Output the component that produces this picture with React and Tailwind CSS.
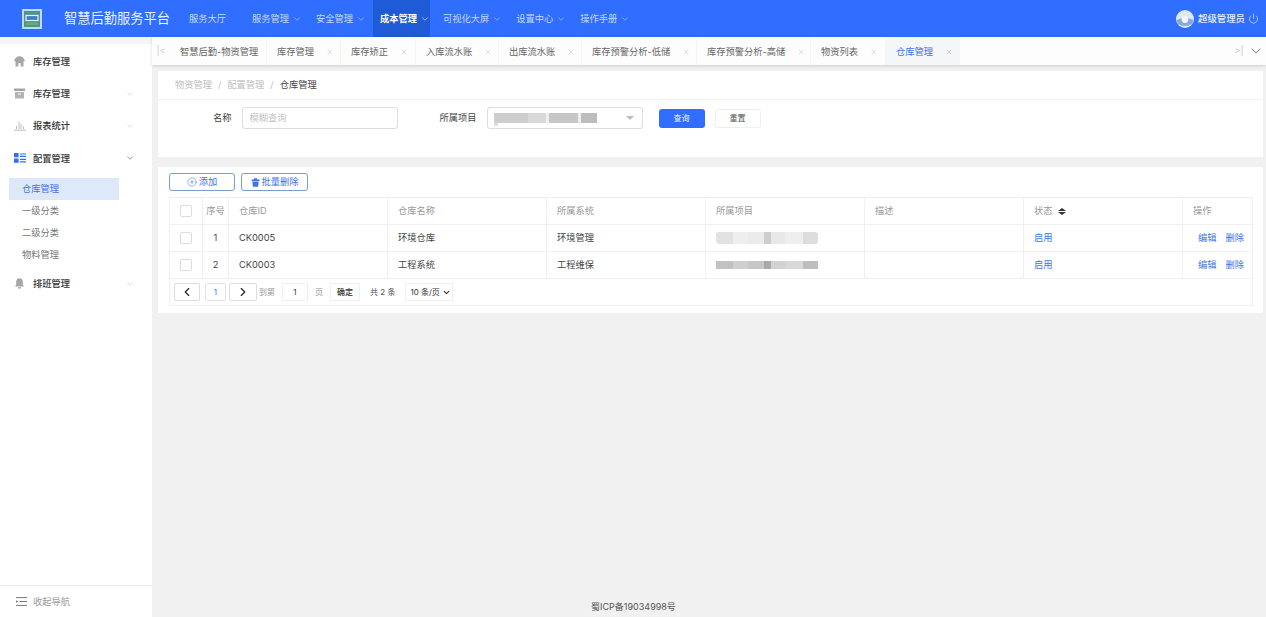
import React from "react";
import { ChevronDown, ChevronLeft, ChevronRight, X, Power, CirclePlus } from "lucide-react";

const FONT = "font-['Inter','Noto_Sans_CJK_SC',sans-serif]";

function Logo() {
  return (
    <svg width="20" height="20" viewBox="0 0 20 20" className="shrink-0">
      <rect x="1" y="1" width="18" height="18" fill="#4f9490" stroke="#cfe3fa" strokeWidth="1.8" />
      <rect x="4" y="6.5" width="12" height="5" fill="#3f7fc0" stroke="#e6f1fb" strokeWidth="1.2" />
      <rect x="4" y="13.5" width="12" height="2.5" fill="#5fae84" />
    </svg>
  );
}

function Avatar() {
  return (
    <svg width="18" height="18" viewBox="0 0 18 18" className="shrink-0">
      <circle cx="9" cy="9" r="9" fill="#dfe8f6" />
      <path d="M0.5 10 Q9 6 17.5 10 L16 14 Q9 18 2 14 Z" fill="#86a9e0" />
      <circle cx="9" cy="9.5" r="3.4" fill="#f3f6fb" />
    </svg>
  );
}

function NavItem({ label, arrow = true, active = false, className = "" }) {
  return (
    <div className={`flex h-full items-center gap-[3px] ${active ? "bg-[#1f5bd6] pl-[7px] font-bold text-white" : "text-[#c5d8ff]"} ${className}`}>
      <span>{label}</span>
      {arrow && <ChevronDown size={10} strokeWidth={1.5} />}
    </div>
  );
}

function Tab({ label, close = true, active = false, w }) {
  return (
    <div className={`flex h-full shrink-0 items-center gap-[12px] border-r border-[#f5f5f5] pl-[10px] pt-[1px] ${w} ${active ? "bg-[#f5f6f8] text-[#3f74e4]" : "text-[#666]"}`}>
      <span>{label}</span>
      {close && <X size={8} strokeWidth={1.5} className={active ? "text-[#8fa8d8]" : "text-[#c4c4c4]"} />}
    </div>
  );
}

function SideItem({ icon, label, arrow = true, dark = false }) {
  return (
    <div className="flex h-[32.4px] items-center pl-[14px] pr-[17px] text-[#333]">
      <span className="flex w-[19px] shrink-0 items-center">{icon}</span>
      <span className="font-medium">{label}</span>
      {arrow && <ChevronDown size={10} strokeWidth={1.4} className={`ml-auto ${dark ? "text-[#555]" : "text-[#c4c4c4]"}`} />}
    </div>
  );
}

function Redacted({ dark = false }) {
  const c = dark
    ? ["bg-[#c2c2c2]", "bg-[#cfcfcf]", "bg-[#c6c6c6]", "bg-[#a9a9a9]", "bg-[#d2d2d2]", "bg-[#d8d8d8]", "bg-[#bebebe]"]
    : ["bg-[#e2e2e2]", "bg-[#eeeeee]", "bg-[#ebebeb]", "bg-[#cdcdcd]", "bg-[#e8e8e8]", "bg-[#eeeeee]", "bg-[#dddddd]"];
  const w = ["w-[17px]", "w-[15px]", "w-[16px]", "w-[7px]", "w-[14px]", "w-[18px]", "w-[15px]"];
  return (
    <div className={`flex overflow-hidden ${dark ? "h-[8px]" : "h-[12px] rounded-[3px]"}`}>
      {c.map((x, i) => (
        <div key={i} className={`h-full ${x} ${w[i]}`} />
      ))}
    </div>
  );
}

const ROW = "grid grid-cols-[33px_26px_159px_159px_159px_159px_159px_159px_71px] h-[27px] items-center border-b border-[#f0f0f0]";
const CELL = "flex h-full items-center border-r border-[#f0f0f0] px-[10px]";

function Check() {
  return <div className="h-[12px] w-[12px] rounded-[2px] border border-[#dcdcdc] bg-white" />;
}

function DataRow({ n, id, name, sys, dark }) {
  return (
    <div className={`${ROW} text-[#444]`}>
      <div className={`${CELL} justify-center`}><Check /></div>
      <div className={`${CELL} justify-center`}>{n}</div>
      <div className={CELL}>{id}</div>
      <div className={CELL}>{name}</div>
      <div className={CELL}>{sys}</div>
      <div className={CELL}><Redacted dark={dark} /></div>
      <div className={CELL}></div>
      <div className={`${CELL} text-[#3f74e4]`}>启用</div>
      <div className="flex h-full items-center justify-end gap-[9px] pr-[10px] text-[#3f74e4]"><span>编辑</span><span>删除</span></div>
    </div>
  );
}

export default function App() {
  return (
    <div className={`flex h-[617px] w-[1266px] flex-col overflow-hidden bg-[#f1f1f1] text-[9.25px] leading-none ${FONT}`}>
      <header className="flex h-[37px] shrink-0 items-center bg-[#2f6eff] pl-[22px] pr-[7px]">
        <Logo />
        <span className="ml-[22px] text-[13.25px] text-[#eaf1ff]">智慧后勤服务平台</span>
        <NavItem label="服务大厅" arrow={false} className="ml-[19px]" />
        <NavItem label="服务管理" className="ml-[26px]" />
        <NavItem label="安全管理" className="ml-[14px]" />
        <NavItem label="成本管理" active className="ml-[7px]" />
        <NavItem label="可视化大屏" className="ml-[13px]" />
        <NavItem label="设置中心" className="ml-[14px]" />
        <NavItem label="操作手册" className="ml-[14px]" />
        <div className="ml-auto flex items-center text-[#e9f0ff]">
          <Avatar />
          <span className="ml-[4px] text-[9.4px] font-medium">超级管理员</span>
          <Power size={11} strokeWidth={1.4} className="ml-[3px]" />
        </div>
      </header>

      <div className="flex min-h-0 flex-1">
        <aside className="flex w-[152px] shrink-0 flex-col bg-white">
          <div className="h-[7px] shrink-0 bg-[#f5f5f7]" />
          <div className="h-[1px] shrink-0" />
          <SideItem
            icon={
              <svg width="11" height="11" viewBox="0 0 11 11">
                <path d="M0 5.2 C1 2 3 0.3 5.5 0.3 C8 0.3 10 2 11 5.2 L9.5 5.2 L9.5 10.5 L6.6 10.5 L6.6 7 L4.4 7 L4.4 10.5 L1.5 10.5 L1.5 5.2 Z" fill="#a6a6a6" />
              </svg>
            }
            label="库存管理"
            arrow={false}
          />
          <SideItem
            icon={
              <svg width="11" height="11" viewBox="0 0 11 11">
                <rect x="0" y="0.5" width="11" height="2.5" fill="#a6a6a6" />
                <path d="M1 4 H10 V10.5 H1 Z M4 5.5 V6.6 H7 V5.5 Z" fill="#b4b4b4" fillRule="evenodd" />
              </svg>
            }
            label="库存管理"
          />
          <SideItem
            icon={
              <svg width="12" height="11" viewBox="0 0 12 11">
                <path d="M0 10.2h12M2.5 9V6M5 9V1.5M7 9V4M9.5 9V6.5" stroke="#bcbcbc" strokeWidth="1" fill="none" />
              </svg>
            }
            label="报表统计"
          />
          <SideItem
            icon={
              <svg width="12" height="10" viewBox="0 0 12 10">
                <rect x="0" y="0" width="4.6" height="4.3" fill="#2f6eff" />
                <rect x="0" y="5.5" width="4.6" height="4.3" fill="#2f6eff" />
                <path d="M6 1h6M6 3.4h6M6 6.3h6M6 8.9h6" stroke="#2f6eff" strokeWidth="1.2" />
              </svg>
            }
            label="配置管理"
            dark
          />
          <div className="mt-[3px] flex flex-col pl-[9px] text-[#777]">
            <div className="flex h-[22px] w-[110px] items-center bg-[#dde8fb] pl-[13px] text-[#3f74e4]">仓库管理</div>
            <div className="flex h-[22px] items-center pl-[13px]">一级分类</div>
            <div className="flex h-[22px] items-center pl-[13px]">二级分类</div>
            <div className="flex h-[22px] items-center pl-[13px]">物料管理</div>
          </div>
          <div className="mt-[2px]">
            <SideItem
              icon={
                <svg width="11" height="11" viewBox="0 0 11 11">
                  <path d="M5.5 0.3 C3.2 0.3 2.2 2 2.2 4 V7 L0.8 8.5 H10.2 L8.8 7 V4 C8.8 2 7.8 0.3 5.5 0.3 Z" fill="#a6a6a6" />
                  <rect x="4" y="9.2" width="3" height="1.3" fill="#a6a6a6" />
                </svg>
              }
              label="排班管理"
            />
          </div>
          <div className="mt-auto flex h-[32px] items-center border-t border-[#e6e6e6] pl-[16px] text-[#999]">
            <svg width="11" height="9" viewBox="0 0 11 9" className="shrink-0">
              <path d="M0 0.6h11M3.5 4.5h7.5M0 8.4h11" stroke="#777" strokeWidth="1" />
              <path d="M0 3.2 L2.2 4.5 L0 5.8 Z" fill="#777" />
            </svg>
            <span className="ml-[6px]">收起导航</span>
          </div>
        </aside>

        <main className="flex min-w-0 flex-1 flex-col">
          <div className="flex h-[28px] shrink-0 items-center bg-[#fdfdfd] shadow-[0_1px_3px_rgba(0,0,0,0.15)]">
            <div className="flex h-full w-[18px] shrink-0 items-center justify-center text-[#ccc]">|&lt;</div>
            <Tab label="智慧后勤-物资管理" close={false} w="w-[97px]" />
            <Tab label="库存管理" w="w-[74px]" />
            <Tab label="库存矫正" w="w-[75px]" />
            <Tab label="入库流水账" w="w-[83px]" />
            <Tab label="出库流水账" w="w-[83px]" />
            <Tab label="库存预警分析-低储" w="w-[115px]" />
            <Tab label="库存预警分析-高储" w="w-[114px]" />
            <Tab label="物资列表" w="w-[75px]" />
            <Tab label="仓库管理" active w="w-[74px]" />
            <div className="ml-auto flex h-full items-center">
              <span className="w-[18px] text-center text-[#ccc]">&gt;|</span>
              <ChevronDown size={16} strokeWidth={1.1} className="mr-[2px] text-[#555]" />
            </div>
          </div>

          <div className="flex flex-1 flex-col pl-[6px] pr-[3px] pt-[6px]">
            <section className="h-[86px] shrink-0 bg-white">
              <div className="flex h-[29px] items-center gap-[6px] border-b border-[#f3f3f3] pl-[17px] text-[#c0c0c0]">
                <span>物资管理</span><span>/</span><span>配置管理</span><span>/</span><span className="text-[#444]">仓库管理</span>
              </div>
              <div className="flex items-center pt-[7px] text-[#444]">
                <span className="ml-[55px]">名称</span>
                <div className="ml-[10px] flex h-[22px] w-[156px] items-center rounded-[3px] border border-[#dcdcdc] pl-[7px] text-[#c4c4c4]">模糊查询</div>
                <span className="ml-[42px]">所属项目</span>
                <div className="ml-[10px] flex h-[22px] w-[156px] items-center rounded-[3px] border border-[#dcdcdc] pl-[6px] pr-[8px]">
                  <div className="mt-[3px] flex flex-col">
                    <div className="flex h-[10px] overflow-hidden">
                      <div className="h-full w-[34px] bg-[#cdcdcd]" />
                      <div className="h-full w-[18px] bg-[#d9d9d9]" />
                      <div className="h-full w-[3px] bg-[#eeeeee]" />
                      <div className="h-full w-[29px] bg-[#c6c6c6]" />
                      <div className="h-full w-[3px] bg-[#eeeeee]" />
                      <div className="h-full w-[16px] bg-[#bdbdbd]" />
                    </div>
                    <div className="h-[3px] w-[4px] bg-[#dedede]" />
                  </div>
                  <div className="ml-auto h-0 w-0 border-x-[4px] border-t-[4px] border-x-transparent border-t-[#bdbdbd]" />
                </div>
                <button className="ml-[16px] h-[19px] w-[46px] rounded-[3px] bg-[#2f6eff] text-[8px] text-[#eaf1ff]">查询</button>
                <button className="ml-[10px] h-[19px] w-[46px] rounded-[3px] border border-[#efefef] bg-white text-[8px] text-[#555]">重置</button>
              </div>
            </section>

            <section className="mt-[10px] flex h-[146px] shrink-0 flex-col bg-white px-[11px] pt-[6px]">
              <div className="flex h-[18px] shrink-0 gap-[6px] text-[#3f74e4]">
                <button className="flex w-[66px] items-center justify-center gap-[2px] rounded-[3px] border border-[#7b9dc9]">
                  <CirclePlus size={10} strokeWidth={1.3} />添加
                </button>
                <button className="flex w-[67px] items-center justify-center gap-[2px] rounded-[3px] border border-[#7b9dc9]">
                  <svg width="9" height="9" viewBox="0 0 9 9" className="shrink-0">
                    <path d="M0.5 1.5H8.5V3H0.5Z M3 0.3H6V1.5H3Z M1.3 3.5H7.7L7.1 8.7H1.9Z" fill="#3f74e4" />
                  </svg>
                  批量删除
                </button>
              </div>
              <div className="mt-[6px] w-[1084px] border-x border-b border-t border-[#f0f0f0]">
                <div className={`${ROW} text-[#999]`}>
                  <div className={`${CELL} justify-center`}><Check /></div>
                  <div className={`${CELL} justify-center !px-0`}>序号</div>
                  <div className={CELL}>仓库ID</div>
                  <div className={CELL}>仓库名称</div>
                  <div className={CELL}>所属系统</div>
                  <div className={CELL}>所属项目</div>
                  <div className={CELL}>描述</div>
                  <div className={`${CELL} gap-[5px]`}>
                    <span>状态</span>
                    <span className="flex flex-col gap-[1px]">
                      <span className="h-0 w-0 border-x-[4px] border-b-[3px] border-x-transparent border-b-[#333]" />
                      <span className="h-0 w-0 border-x-[4px] border-t-[3px] border-x-transparent border-t-[#333]" />
                    </span>
                  </div>
                  <div className="px-[10px]">操作</div>
                </div>
                <DataRow n="1" id="CK0005" name="环境仓库" sys="环境管理" />
                <DataRow n="2" id="CK0003" name="工程系统" sys="工程维保" dark />
                <div className="flex h-[26px] items-center pl-[4px] text-[8px] text-[#999]">
                  <button className="flex h-[18px] w-[26px] items-center justify-center rounded-[2px] border border-[#dcdcdc] text-[#222]"><ChevronLeft size={14} strokeWidth={2} /></button>
                  <button className="ml-[5px] h-[18px] w-[21px] rounded-[2px] border border-[#e3e3e3] text-[#3f74e4]">1</button>
                  <button className="ml-[3px] flex h-[18px] w-[28px] items-center justify-center rounded-[2px] border border-[#dcdcdc] text-[#222]"><ChevronRight size={14} strokeWidth={2} /></button>
                  <span className="ml-[2px]">到第</span>
                  <div className="ml-[7px] flex h-[18px] w-[26px] items-center justify-center border border-[#f0f0f0] text-[#333]">1</div>
                  <span className="ml-[7px]">页</span>
                  <button className="ml-[7px] h-[18px] w-[30px] border border-[#f0f0f0] font-medium text-[#333]">确定</button>
                  <span className="ml-[10px] text-[#555]">共 2 条</span>
                  <div className="ml-[10px] flex h-[18px] items-center gap-[2px] border border-[#f0f0f0] pl-[4px] pr-[1px] text-[#333]">
                    10 条/页 <ChevronDown size={9} strokeWidth={3} />
                  </div>
                </div>
              </div>
            </section>

            <div className="mt-auto flex h-[22px] items-center justify-center pr-[154px] text-[9px] text-[#555]">蜀ICP备19034998号</div>
          </div>
        </main>
      </div>
    </div>
  );
}
